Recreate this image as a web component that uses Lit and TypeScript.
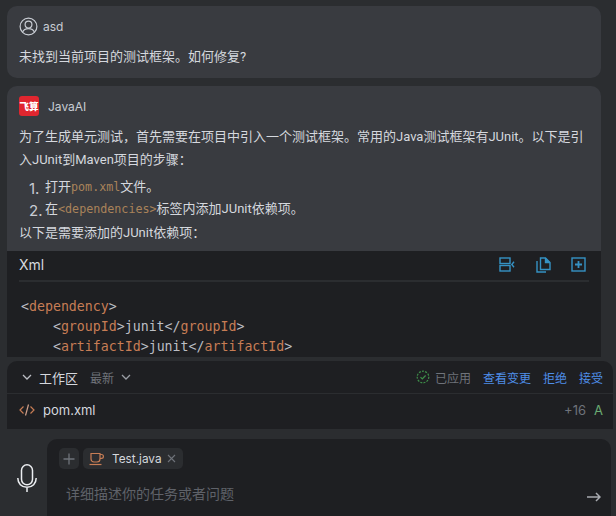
import { LitElement, html, css } from "lit";
import { customElement } from "lit/decorators.js";

@customElement("app-root")
export class AppRoot extends LitElement {
  static styles = css`
    :host {
      display: flex;
      flex-direction: column;
      width: 616px;
      height: 516px;
      overflow: hidden;
      background: #2b2d30;
      color: #d5d8de;
      font-family: "Inter", "Noto Sans CJK SC", sans-serif;
      font-size: 13px;
    }
    .chat {
      height: 357px;
      flex: none;
      overflow: hidden;
      padding: 6px 15px 0 7px;
      box-sizing: border-box;
      display: flex;
      flex-direction: column;
      gap: 8px;
    }
    .card {
      background: #393b40;
      border-radius: 10px;
      flex: none;
    }
    .user {
      height: 72px;
      box-sizing: border-box;
      padding: 10px 12px 0;
    }
    .who {
      display: flex;
      align-items: center;
      height: 20px;
      font-size: 12px;
      color: #c8ccd3;
    }
    .who svg { flex: none; }
    .user .who { gap: 5px; }
    .bot .who { gap: 9px; }
    .p, li {
      font-family: "Roboto", "Noto Sans CJK SC", sans-serif;
    }
    .p { line-height: 21px; }
    .user .p { margin-top: 10px; }
    .bot {
      overflow: hidden;
      flex: 1;
      display: flex;
      flex-direction: column;
      border-radius: 10px 10px 0 0;
    }
    .bot-head { padding: 10px 12px 0; flex: none; }
    .bot .intro { margin-top: 9px; line-height: 23px; }
    ol {
      margin: 0;
      padding: 0 0 0 26px;
      line-height: 22px;
      list-style: none;
    }
    ol.steps { margin-top: 5px; }
    li { display: flex; position: relative; }
    li .n {
      position: absolute;
      left: -16px;
      top: 2px;
      color: #c8ccd3;
      font-family: "Inter", sans-serif;
      font-size: 15px;
    }
    .after { margin-top: 2px; }
    code {
      font-family: "DejaVu Sans Mono", monospace;
      font-size: 11.7px;
      color: #a9835a;
    }
    .code {
      background: #1e1f22;
      flex: 1;
      margin-top: 8px;
      padding: 0 12px;
    }
    .code-head {
      height: 31px;
      box-sizing: border-box;
      padding-bottom: 2px;
      display: flex;
      align-items: center;
      justify-content: space-between;
      border-bottom: 2px solid #2b2d30;
      font-size: 14px;
      color: #d5d8de;
    }
    .tools { display: flex; align-items: center; gap: 21px; padding-right: 3px; }
    .tools .last { margin-left: -1px; }
    pre {
      margin: 15px 2px 0;
      font-family: "DejaVu Sans Mono", monospace;
      font-size: 13.25px;
      line-height: 20px;
      color: #bcbec4;
    }
    .t { color: #c77d55; }
    .panel {
      flex: none;
      margin: 4px 3px 0 7px;
      height: 68px;
      background: #1e1f22;
      border-radius: 10px 10px 0 0;
      display: flex;
      flex-direction: column;
    }
    .phead {
      height: 32px;
      flex: none;
      display: flex;
      align-items: center;
      padding: 0 10px 0 14px;
      border-bottom: 1px solid #2b2d30;
    }
    .ptitle { margin-left: 6px; color: #d5d8de; font-size: 13px; }
    .latest { margin-left: 12px; color: #6f737a; font-size: 12px; }
    .chev2 { margin-left: 6px; }
    .spacer { flex: 1; }
    .applied { display: flex; align-items: center; gap: 5px; color: #6f737a; font-size: 12px; }
    .link { color: #4e8ee8; font-size: 12px; margin-left: 12px; }
    .frow {
      flex: 1;
      display: flex;
      align-items: center;
      padding: 0 10px 3px 12px;
    }
    .fname { margin-left: 8px; color: #d5d8de; font-size: 13px; }
    .plus { color: #6f737a; font-size: 13px; }
    .stat { color: #6aab73; font-size: 13px; margin-left: 8px; }
    .composer {
      flex: 1;
      display: flex;
      padding: 10px 5px 0 0;
    }
    .mic {
      width: 47px;
      flex: none;
      display: flex;
      justify-content: center;
      padding: 25px 0 0 7px;
      box-sizing: border-box;
    }
    .box {
      flex: 1;
      background: #1e1f22;
      border-radius: 10px 10px 0 0;
      padding: 9px 10px 0 12px;
      display: flex;
      flex-direction: column;
    }
    .chips { display: flex; gap: 4px; height: 21px; align-items: stretch; }
    .addb {
      width: 20px;
      background: #2b2d30;
      border-radius: 5px;
      display: flex;
      align-items: center;
      justify-content: center;
    }
    .chip {
      display: flex;
      align-items: center;
      background: #2b2d30;
      border-radius: 5px;
      padding: 0 7px 0 6px;
      font-size: 11.8px;
      color: #d5d8de;
    }
    .chip .nm { margin-left: 8px; }
    .chip .x { margin-left: 5px; }
    .inputrow {
      display: flex;
      justify-content: space-between;
      margin-top: 14px;
      padding-left: 7px;
      color: #5f6269;
      font-size: 14px;
      line-height: 21px;
    }
    .inputrow svg { margin-top: 9px; margin-right: 0; }
  `;

  render() {
    return html`
      <div class="chat">
        <div class="card user">
          <div class="who">
            <svg width="19" height="19" viewBox="0 0 19 19" fill="none" stroke="#c8ccd3" stroke-width="1.2">
              <circle cx="9.5" cy="9.5" r="8.4"></circle>
              <circle cx="9.5" cy="7.6" r="3.4"></circle>
              <path d="M3.6 15.2c1-2.7 3.2-3.6 5.9-3.6s4.9.9 5.9 3.6"></path>
            </svg>
            <span>asd</span>
          </div>
          <div class="p">未找到当前项目的测试框架。如何修复?</div>
        </div>
        <div class="card bot">
          <div class="bot-head">
            <div class="who">
              <svg width="20" height="20" viewBox="0 0 20 20">
                <rect width="20" height="20" rx="3" fill="#e0262f"></rect>
                <text x="10" y="14" text-anchor="middle" font-size="9.5" font-weight="900" fill="#fff" font-family="Noto Sans CJK SC, sans-serif">飞算</text>
              </svg>
              <span>JavaAI</span>
            </div>
            <div class="p intro">为了生成单元测试，首先需要在项目中引入一个测试框架。常用的Java测试框架有JUnit。以下是引入JUnit到Maven项目的步骤：</div>
            <ol class="steps">
              <li><span class="n">1.</span><span>打开<code>pom.xml</code>文件。</span></li>
              <li><span class="n">2.</span><span>在<code>&lt;dependencies&gt;</code>标签内添加JUnit依赖项。</span></li>
            </ol>
            <div class="p after">以下是需要添加的JUnit依赖项：</div>
          </div>
          <div class="code">
            <div class="code-head">
              <span>Xml</span>
              <div class="tools">
                <svg width="16" height="15" viewBox="0 0 16 15" fill="none" stroke="#3592c4" stroke-width="1.4">
                  <rect x="1" y="1" width="10" height="5.5"></rect>
                  <rect x="1" y="8.5" width="10" height="5.5"></rect>
                  <path d="M15 4.8 12.800 7.500 15 10.200"></path>
                </svg>
                <svg width="15" height="16" viewBox="0 0 15 16" fill="none" stroke="#3592c4" stroke-width="1.4">
                  <path d="M4.500 1H9.500l4.500 4.500v7H4.500z"></path>
                  <path d="M9.500 1v4.500H14" fill="#3592c4"></path>
                  <path d="M1 4v11h9"></path>
                </svg>
                <svg class="last" width="15" height="15" viewBox="0 0 15 15" fill="none" stroke="#3592c4" stroke-width="1.4">
                  <rect x="1" y="1" width="13" height="13"></rect>
                  <path d="M7.500 4v7M4 7.500h7" stroke-width="1.800"></path>
                </svg>
              </div>
            </div>
            <pre>&lt;<span class="t">dependency</span>&gt;
    &lt;<span class="t">groupId</span>&gt;junit&lt;/<span class="t">groupId</span>&gt;
    &lt;<span class="t">artifactId</span>&gt;junit&lt;/<span class="t">artifactId</span>&gt;</pre>
          </div>
        </div>
      </div>
      <div class="panel">
        <div class="phead">
          <svg width="12" height="12" viewBox="0 0 12 12" fill="none" stroke="#bcbec4" stroke-width="1.300"><path d="M2 4l4 4 4-4"></path></svg>
          <span class="ptitle">工作区</span>
          <span class="latest">最新</span>
          <svg class="chev2" width="12" height="12" viewBox="0 0 12 12" fill="none" stroke="#9a9da4" stroke-width="1.300"><path d="M2 4l4 4 4-4"></path></svg>
          <span class="spacer"></span>
          <span class="applied">
            <svg width="14" height="14" viewBox="0 0 14 14" fill="none" stroke="#3f8f4a" stroke-width="1.200">
              <circle cx="7" cy="7" r="5.800" stroke-dasharray="2 1.200"></circle>
              <path d="M4.500 7.200 6.300 9l3.300-3.500"></path>
            </svg>
            已应用
          </span>
          <span class="link">查看变更</span>
          <span class="link">拒绝</span>
          <span class="link">接受</span>
        </div>
        <div class="frow">
          <svg width="16" height="14" viewBox="0 0 16 14" fill="none" stroke="#c77d55" stroke-width="1.200">
            <path d="M4.500 3.500 1 7l3.500 3.500M11.500 3.500 15 7l-3.500 3.500"></path>
            <path d="M9.500 1.500 6.500 12.500" stroke="#d0a08a"></path>
          </svg>
          <span class="fname">pom.xml</span>
          <span class="spacer"></span>
          <span class="plus">+16</span>
          <span class="stat">A</span>
        </div>
      </div>
      <div class="composer">
        <div class="mic">
          <svg width="20" height="28" viewBox="0 0 20 28" fill="none" stroke="#eceef1" stroke-width="1.500">
            <rect x="4.500" y="0.800" width="11" height="20" rx="5.500"></rect>
            <path d="M0.800 14c0 5.500 3.700 9.200 9.200 9.200s9.200-3.700 9.200-9.200M10 23.200V28"></path>
          </svg>
        </div>
        <div class="box">
          <div class="chips">
            <div class="addb">
              <svg width="12" height="12" viewBox="0 0 12 12" stroke="#6f737a" stroke-width="1.300"><path d="M6 .5v11M.5 6h11"></path></svg>
            </div>
            <div class="chip">
              <svg width="15" height="15" viewBox="0 0 15 15" fill="none" stroke="#c77d55" stroke-width="1.200">
                <path d="M2 2.500h9v5.500a3 3 0 0 1-3 3H5a3 3 0 0 1-3-3z"></path>
                <path d="M11 3.500h1.500a1.300 1.300 0 0 1 0 3.800L11 7.500"></path>
                <path d="M.5 13.500h12"></path>
              </svg>
              <span class="nm">Test.java</span>
              <svg class="x" width="9" height="9" viewBox="0 0 9 9" stroke="#6f737a" stroke-width="1.100"><path d="M1 1l7 7M8 1 1 8"></path></svg>
            </div>
          </div>
          <div class="inputrow">
            <span>详细描述你的任务或者问题</span>
            <svg width="14" height="10" viewBox="0 0 14 10" fill="none" stroke="#a8abb0" stroke-width="1.500"><path d="M0 5h13M9 1l4 4-4 4"></path></svg>
          </div>
        </div>
      </div>
    `;
  }
}
